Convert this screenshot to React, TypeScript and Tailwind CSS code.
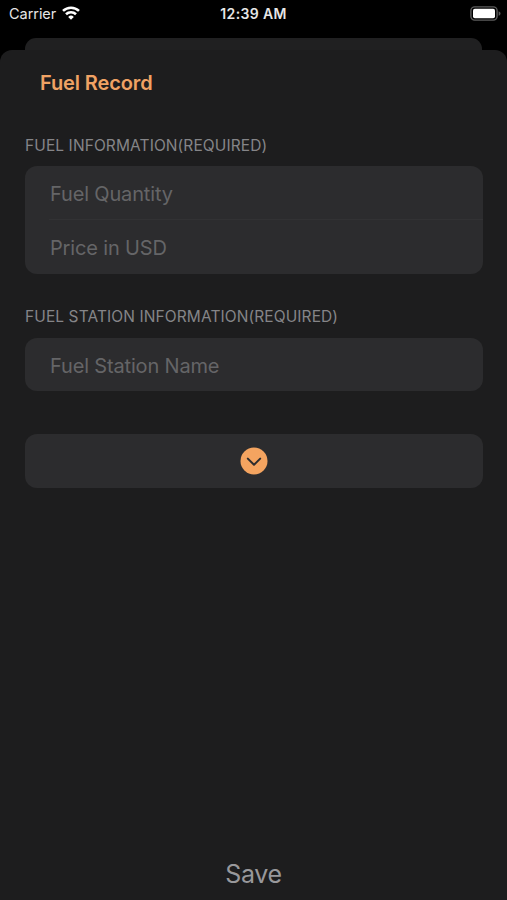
import type { ReactNode } from 'react'

function WifiIcon() {
  return (
    <svg className="h-[14px] w-[18px]" viewBox="0 0 18 14" fill="none" stroke="#fff" strokeWidth={2.6}>
      <path d="M1 4.9a11.6 11.6 0 0 1 16 0" />
      <path d="M4 8.3a7.2 7.2 0 0 1 10 0" />
      <path d="M9 13.7 6.2 10.9a4.1 4.1 0 0 1 5.6 0z" fill="#fff" stroke="none" />
    </svg>
  )
}

function BatteryIcon() {
  return (
    <svg className="h-[15px] w-[31px]" viewBox="0 0 31 15">
      <rect x="0.9" y="0.9" width="26.2" height="13.2" rx="3.8" fill="none" stroke="#5c5c5c" strokeWidth="1.4" />
      <rect x="3" y="2.8" width="22" height="9.4" rx="1.8" fill="#fff" />
      <path d="M28.6 5.2c1.2.4 1.9 1.3 1.9 2.3s-.7 1.9-1.9 2.3z" fill="#5c5c5c" />
    </svg>
  )
}

function StatusBar() {
  return (
    <div className="grid h-[38px] grid-cols-3 items-start pt-[6px] text-[14.5px] leading-4 text-[#e6e6e6]">
      <div className="flex gap-[6px] pl-[9px]">
        <span className="tracking-[-0.05px]">Carrier</span>
        <WifiIcon />
      </div>
      <div className="text-center text-[14px] font-semibold tracking-[0.35px]">12:39 AM</div>
      <div className="flex justify-end pr-[6px]">
        <BatteryIcon />
      </div>
    </div>
  )
}

function SectionTitle({ children }: { children: ReactNode }) {
  return <h2 className="text-[15.5px] leading-5 tracking-[0.1px] whitespace-nowrap text-[#858588]">{children}</h2>
}

function Field({ label }: { label: string }) {
  return (
    <input
      aria-label={label}
      placeholder={label}
      className="block h-[53px] w-full bg-transparent pt-[2px] pr-6 pl-[25px] text-[20px] tracking-[-0.16px] text-white outline-none placeholder:text-[#656567] placeholder:opacity-100"
    />
  )
}

export default function App() {
  return (
    <div className="flex h-[900px] w-[507px] flex-col overflow-hidden bg-black font-[Inter,sans-serif]">
      <StatusBar />
      {/* edge of the sheet underneath */}
      <div className="mx-[25px] h-3 shrink-0 rounded-t-[11px] bg-[#202021]" />
      <main className="flex flex-1 flex-col rounded-t-[12px] bg-[#1d1d1e] px-[25px]">
        <h1 className="mt-[19px] pl-[15px] text-[20px] leading-7 font-semibold tracking-[-0.12px] text-[#f0a264]">
          Fuel Record
        </h1>

        <section className="mt-[39px]">
          <SectionTitle>FUEL INFORMATION(REQUIRED)</SectionTitle>
          <div className="mt-[10px] h-[108px] w-[458px] rounded-[12px] bg-[#2c2c2e]">
            <Field label="Fuel Quantity" />
            <div className="ml-[24px] h-px bg-[#323234]" />
            <Field label="Price in USD" />
          </div>
        </section>

        <section className="mt-[33px]">
          <SectionTitle>FUEL STATION INFORMATION(REQUIRED)</SectionTitle>
          <div className="mt-[11px] h-[53px] w-[458px] rounded-[12px] bg-[#2c2c2e]">
            <Field label="Fuel Station Name" />
          </div>
        </section>

        <button
          aria-label="Show more"
          className="mt-[43px] flex h-[54px] w-[458px] items-center justify-center rounded-[12px] bg-[#2c2c2e]"
        >
          <svg className="h-7 w-7" viewBox="0 0 28 28" fill="none">
            <circle cx="14" cy="14" r="13.5" fill="#f4a460" />
            <path d="m7.8 11.6 6.2 6.2 6.2-6.2" stroke="#2c2c2e" strokeWidth="2" strokeLinecap="round" strokeLinejoin="round" />
          </svg>
        </button>

        <button className="mx-auto mt-auto mb-[10px] text-[25px] leading-8 tracking-[-0.3px] text-[#98989b]">Save</button>
      </main>
    </div>
  )
}
